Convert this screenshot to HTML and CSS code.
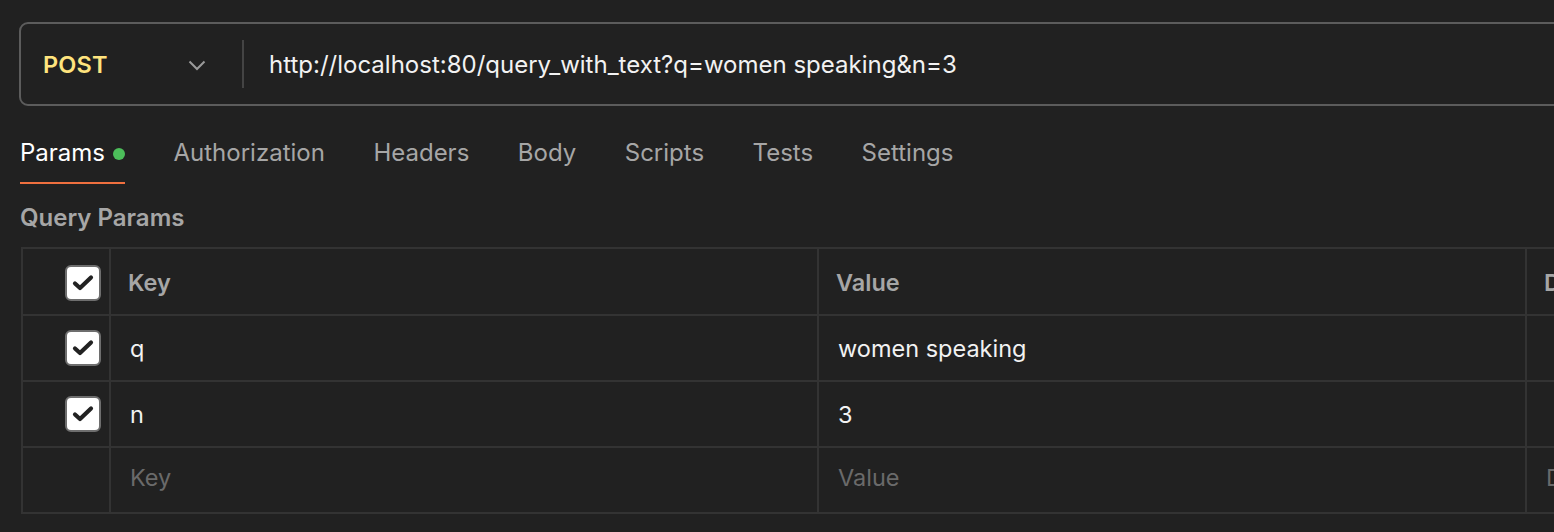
FILE: index.html
```html
<!DOCTYPE html>
<html>
<head>
<meta charset="utf-8">
<link rel="stylesheet" href="styles.css">
</head>
<body>
<div class="page">
  <div class="urlbar">
    <div class="method">
      <span class="method-name">POST</span>
      <svg class="chev" width="18" height="11" viewBox="0 0 18 11"><path d="M1.5 1.5 L9 9 L16.5 1.5" fill="none" stroke="#9a9a9a" stroke-width="2"/></svg>
    </div>
    <div class="divider"></div>
    <div class="url">http://localhost:80/query_with_text?q=women speaking&amp;n=3</div>
  </div>

  <div class="tabs">
    <div class="tab active">Params <span class="dot"></span></div>
    <div class="tab">Authorization</div>
    <div class="tab">Headers</div>
    <div class="tab">Body</div>
    <div class="tab">Scripts</div>
    <div class="tab">Tests</div>
    <div class="tab">Settings</div>
  </div>

  <div class="section-title">Query Params</div>

  <div class="table">
    <div class="row head">
      <div class="cell chk"><span class="box"><svg width="24" height="20" viewBox="0 0 24 20"><path d="M4 10.5 L9 15 L20 4.5" fill="none" stroke="#222" stroke-width="4.2" stroke-linecap="round" stroke-linejoin="round"/></svg></span></div>
      <div class="cell">Key</div>
      <div class="cell">Value</div>
      <div class="cell">Description</div>
    </div>
    <div class="row">
      <div class="cell chk"><span class="box"><svg width="24" height="20" viewBox="0 0 24 20"><path d="M4 10.5 L9 15 L20 4.5" fill="none" stroke="#222" stroke-width="4.2" stroke-linecap="round" stroke-linejoin="round"/></svg></span></div>
      <div class="cell val">q</div>
      <div class="cell val">women speaking</div>
      <div class="cell val"></div>
    </div>
    <div class="row">
      <div class="cell chk"><span class="box"><svg width="24" height="20" viewBox="0 0 24 20"><path d="M4 10.5 L9 15 L20 4.5" fill="none" stroke="#222" stroke-width="4.2" stroke-linecap="round" stroke-linejoin="round"/></svg></span></div>
      <div class="cell val">n</div>
      <div class="cell val">3</div>
      <div class="cell val"></div>
    </div>
    <div class="row">
      <div class="cell chk"></div>
      <div class="cell ph">Key</div>
      <div class="cell ph">Value</div>
      <div class="cell ph">Description</div>
    </div>
  </div>
</div>
</body>
</html>
```

FILE: styles.css
```css
html, body {
  margin: 0;
  padding: 0;
  background: #212121;
  overflow: hidden;
}
body {
  font-family: Inter, "Noto Sans", "Liberation Sans", sans-serif;
  color: #ffffff;
}
.page {
  width: 1700px;
  padding: 22px 0 0 19px;
}
.urlbar {
  height: 80px;
  border: 2px solid #5c5c5c;
  border-radius: 9px;
  display: flex;
  align-items: center;
}
.method {
  width: 221px;
  display: flex;
  align-items: center;
  justify-content: space-between;
  padding-left: 22px;
  padding-right: 36px;
  box-sizing: border-box;
}
.method-name {
  color: #ffe47e;
  font-weight: 600;
  font-size: 23.5px;
  letter-spacing: 0.2px;
}
.chev { margin-top: 2px; }
.divider {
  width: 2px;
  height: 48px;
  background: #444;
}
.url {
  padding-left: 25px;
  font-size: 24px;
  color: #f2f2f2;
}
.tabs {
  display: flex;
  gap: 48.5px;
  margin-top: 32px;
  padding-left: 1px;
}
.tab {
  font-size: 24px;
  line-height: 29px;
  color: #a6a6a6;
  padding-bottom: 15px;
  display: flex;
  align-items: center;
  border-bottom: 2px solid transparent;
}
.tab.active {
  color: #ffffff;
  border-bottom-color: #f0703f;
}
.dot {
  display: inline-block;
  width: 12px;
  height: 12px;
  border-radius: 50%;
  background: #4cbe5a;
  margin-left: 8px;
  margin-top: 2px;
}
.section-title {
  margin-top: 19px;
  font-size: 24px;
  line-height: 29px;
  font-weight: 600;
  color: #a6a6a6;
  padding-left: 1px;
}
.table {
  margin-top: 15px;
  margin-left: 2px;
  border-top: 2px solid #333;
  border-left: 2px solid #333;
}
.row {
  display: grid;
  grid-template-columns: 88px 708px 708px 200px;
  height: 66px;
  border-bottom: 2px solid #333;
  box-sizing: border-box;
}
.row.head { height: 67px; }
.cell {
  display: flex;
  align-items: center;
  padding-left: 19px;
  border-right: 2px solid #333;
  font-size: 23.5px;
  color: #f2f2f2;
}
.row.head .cell {
  color: #a6a6a6;
  font-weight: 600;
  font-size: 23.5px;
  padding-left: 17px;
  padding-top: 2px;
}
.cell.ph { color: #6a6a6a; padding-bottom: 6px; }
.cell.chk {
  justify-content: flex-end;
  padding-left: 0;
  padding-right: 8px;
  padding-top: 0;
  padding-bottom: 0;
}
.box {
  width: 32px;
  height: 32px;
  background: #ffffff;
  border: 2px solid #6e6e6e;
  border-radius: 6px;
  display: flex;
  align-items: center;
  justify-content: center;
}
```
